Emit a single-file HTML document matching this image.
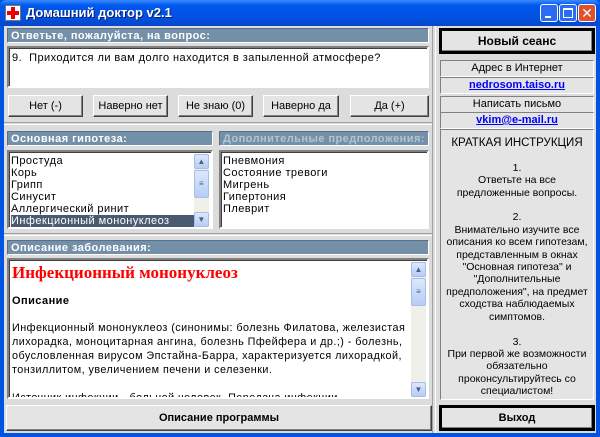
<!DOCTYPE html>
<html><head><meta charset="utf-8"><style>
*{margin:0;padding:0;box-sizing:border-box}
body{width:600px;height:437px;overflow:hidden;background:#0054E3;font-family:"Liberation Sans","DejaVu Sans",sans-serif;font-size:11px;color:#000;position:relative}
.a{position:absolute}
#title{left:0;top:0;width:600px;height:26px;background:linear-gradient(#3a8cff,#0058ee 20%,#0050e0 70%,#0846c8);border-radius:6px 6px 0 0}
#client{left:4px;top:26px;width:592px;height:407px;background:#dcdcdc}
.hdr{background:#7490a8;color:#fff;font-weight:bold;font-size:11px;height:15px;line-height:15px;padding-left:3px;border:1px solid #fff;border-color:#5a7088 #fff #fff #5a7088}
.box{background:#fff;border:2px solid;border-color:#808080 #fff #fff #808080;box-shadow:inset 1px 1px 0 #404040}
.btn{background:#e4e4e4;border:1px solid;border-color:#fff #404040 #404040 #fff;box-shadow:inset -1px -1px 0 #808080;text-align:center;font-size:11px;line-height:20px}
.sb{background:#f0f0ea;position:absolute;right:2px;width:15px}
.arr{position:absolute;left:0;width:15px;height:15px;background:linear-gradient(#dce8fc,#b6cdf6);border:1px solid #a5bde8;border-radius:2px;font-size:8px;color:#4d6185;text-align:center;line-height:13px}
.pan{background:#e4e4e4;border:1px solid;border-color:#808080 #fff #fff #808080;text-align:center}
.ls{letter-spacing:0.45px}
</style></head><body>
<div id="title" class="a">
 <div class="a" style="left:5px;top:5px;width:16px;height:16px;background:#fff;border:1px solid #777"><div class="a" style="left:5px;top:1px;width:4px;height:12px;background:#e00"></div><div class="a" style="left:1px;top:5px;width:12px;height:4px;background:#e00"></div></div>
 <div class="a" style="left:26px;top:5px;color:#fff;font-weight:bold;font-size:13px;text-shadow:1px 1px 0 #0a1e6a">Домашний доктор v2.1</div>
 <div class="a" style="left:540px;top:4px;width:18px;height:18px;border:1px solid #fff;border-radius:3px;background:#2a6cf2"><div class="a" style="left:4px;top:11px;width:6px;height:2px;background:#fff"></div></div>
 <div class="a" style="left:559px;top:4px;width:18px;height:18px;border:1px solid #fff;border-radius:3px;background:#2a6cf2"><div class="a" style="left:3px;top:3px;width:10px;height:10px;border:1px solid #fff;border-top-width:2px"></div></div>
 <div class="a" style="left:578px;top:4px;width:18px;height:18px;border:1px solid #fff;border-radius:3px;background:#e0502a;color:#fff;font-weight:bold;font-size:14px;line-height:16px;text-align:center">✕</div>
</div>
<div id="client" class="a"></div>
<div class="a" style="left:432px;top:26px;width:4px;height:407px;border-left:1px solid #a0a0a0;border-right:1px solid #fff"></div>
<div class="a" style="left:4px;top:122px;width:428px;height:3px;border-top:1px solid #a0a0a0;border-bottom:1px solid #fff"></div>
<div class="a" style="left:4px;top:233px;width:428px;height:3px;border-top:1px solid #a0a0a0;border-bottom:1px solid #fff"></div>

<div class="a hdr ls" style="left:7px;top:28px;width:422px">Ответьте, пожалуйста, на вопрос:</div>
<div class="a box ls" style="left:7px;top:46px;width:422px;height:42px;padding:4px 3px;font-size:11px;white-space:nowrap">9.&nbsp; Приходится ли вам долго находится в запыленной атмосфере?</div>
<div class="a btn" style="left:8px;top:95px;width:75px;height:22px">Нет (-)</div>
<div class="a btn" style="left:93px;top:95px;width:75px;height:22px">Наверно нет</div>
<div class="a btn" style="left:178px;top:95px;width:75px;height:22px">Не знаю (0)</div>
<div class="a btn" style="left:263px;top:95px;width:76px;height:22px">Наверно да</div>
<div class="a btn" style="left:350px;top:95px;width:79px;height:22px">Да (+)</div>

<div class="a hdr ls" style="left:7px;top:131px;width:206px">Основная гипотеза:</div>
<div class="a hdr ls" style="left:219px;top:131px;width:210px;color:#b4c4d2;white-space:nowrap;overflow:hidden">Дополнительные предположения:</div>
<div class="a box ls" style="left:7px;top:150px;width:206px;height:79px;padding:3px 2px;line-height:12px;overflow:hidden;white-space:nowrap">
Простуда<br>Корь<br>Грипп<br>Синусит<br>Аллергический ринит<br><span style="background:#4a5a70;color:#fff;display:inline-block;width:185px">Инфекционный мононуклеоз</span>
<div class="sb" style="top:2px;height:73px"><div class="arr" style="top:0">▲</div><div class="arr" style="top:16px;height:28px;line-height:26px">≡</div><div class="arr" style="top:58px">▼</div></div>
</div>
<div class="a box ls" style="left:219px;top:150px;width:210px;height:79px;padding:3px 2px;line-height:12px">Пневмония<br>Состояние тревоги<br>Мигрень<br>Гипертония<br>Плеврит</div>

<div class="a hdr ls" style="left:7px;top:240px;width:422px">Описание заболевания:</div>
<div class="a box" style="left:7px;top:258px;width:422px;height:141px;padding:2px 3px;overflow:hidden">
<div style="color:#f00;font-family:'Liberation Serif',serif;font-weight:bold;font-size:17px;line-height:22px">Инфекционный мононуклеоз</div>
<div class="ls" style="font-weight:bold;margin-top:10px;line-height:14px">Описание</div>
<div class="ls" style="line-height:14px;margin-top:13px;white-space:nowrap;font-size:10.8px">Инфекционный мононуклеоз (синонимы: болезнь Филатова, железистая<br>лихорадка, моноцитарная ангина, болезнь Пфейфера и др.;) - болезнь,<br>обусловленная вирусом Эпстайна-Барра, характеризуется лихорадкой,<br>тонзиллитом, увеличением печени и селезенки.<br><br>Источник инфекции - больной человек. Передача инфекции<br>происходит воздушно-капельным путем, но чаще со слюной (например</div>
<div class="sb" style="top:2px;height:135px;right:1px"><div class="arr" style="top:0">▲</div><div class="arr" style="top:16px;height:28px;line-height:26px">≡</div><div class="arr" style="top:120px">▼</div></div>
</div>
<div class="a btn" style="left:6px;top:405px;width:426px;height:26px;line-height:24px;font-weight:bold">Описание программы</div>

<div class="a btn" style="left:439px;top:28px;width:156px;height:26px;line-height:20px;font-weight:bold;font-size:12px;border:3px solid #000">Новый сеанс</div>
<div class="a pan" style="left:440px;top:60px;width:154px;height:17px;line-height:15px">Адрес в Интернет</div>
<div class="a pan" style="left:440px;top:77px;width:154px;height:17px;line-height:15px;color:#00f;font-weight:bold;text-decoration:underline">nedrosom.taiso.ru</div>
<div class="a pan" style="left:440px;top:96px;width:154px;height:17px;line-height:15px">Написать письмо</div>
<div class="a pan" style="left:440px;top:112px;width:154px;height:17px;line-height:15px;color:#00f;font-weight:bold;text-decoration:underline">vkim@e-mail.ru</div>
<div class="a pan" style="left:440px;top:129px;width:154px;height:271px;padding-top:7px;font-size:10.5px;line-height:12.4px">
<div style="font-size:11.5px">КРАТКАЯ ИНСТРУКЦИЯ</div><br>1.<br>Ответьте на все<br>предложенные вопросы.<br><br>2.<br>Внимательно изучите все<br>описания ко всем гипотезам,<br>представленным в окнах<br>"Основная гипотеза" и<br>"Дополнительные<br>предположения", на предмет<br>сходства наблюдаемых<br>симптомов.<br><br>3.<br>При первой же возможности<br>обязательно<br>проконсультируйтесь со<br>специалистом!</div>
<div class="a btn" style="left:439px;top:405px;width:156px;height:26px;line-height:20px;font-weight:bold;border:3px solid #000">Выход</div>
</body></html>
